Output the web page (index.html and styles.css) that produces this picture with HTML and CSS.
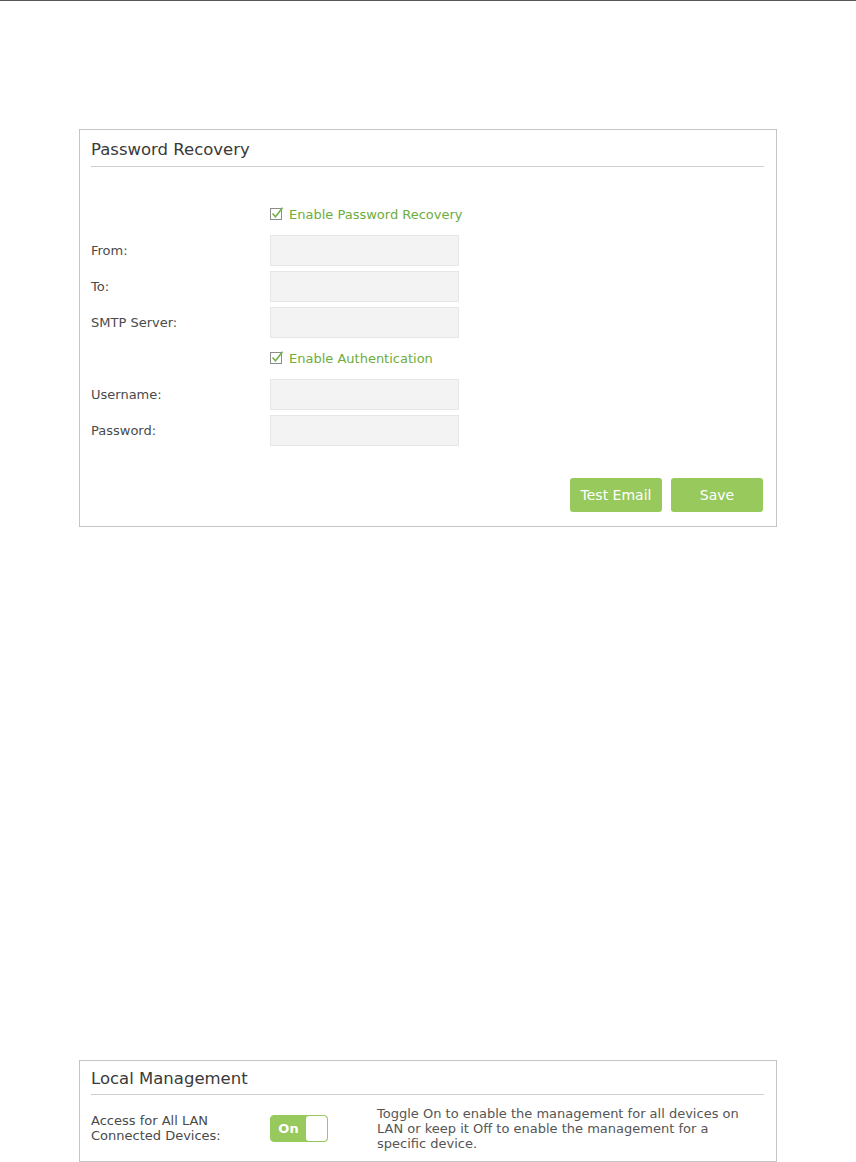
FILE: index.html
```html
<!DOCTYPE html>
<html lang="en">
<head>
    <meta charset="UTF-8">
    <title>Password Recovery</title>
    <link rel="stylesheet" href="styles.css">
</head>
<body>
    <div class="top-rule"></div>

    <!-- Password Recovery panel -->
    <div class="panel panel-recovery">
        <h3 class="panel-title">Password Recovery</h3>
        <div class="form">
            <div class="row">
                <span class="label"></span>
                <label class="check">
                    <svg width="14" height="14" viewBox="0 0 14 14">
                        <rect x="0.5" y="1.5" width="11" height="11" fill="#fff" stroke="#8c8c8c"/>
                        <path d="M2.5 6.5 L5.5 9.8 L12.5 0.8" fill="none" stroke="#74b144" stroke-width="1.6"/>
                    </svg>
                    Enable Password Recovery
                </label>
            </div>
            <div class="row">
                <span class="label">From:</span>
                <input class="field" type="text">
            </div>
            <div class="row">
                <span class="label">To:</span>
                <input class="field" type="text">
            </div>
            <div class="row">
                <span class="label">SMTP Server:</span>
                <input class="field" type="text">
            </div>
            <div class="row">
                <span class="label"></span>
                <label class="check">
                    <svg width="14" height="14" viewBox="0 0 14 14">
                        <rect x="0.5" y="1.5" width="11" height="11" fill="#fff" stroke="#8c8c8c"/>
                        <path d="M2.5 6.5 L5.5 9.8 L12.5 0.8" fill="none" stroke="#74b144" stroke-width="1.6"/>
                    </svg>
                    Enable Authentication
                </label>
            </div>
            <div class="row">
                <span class="label">Username:</span>
                <input class="field" type="text">
            </div>
            <div class="row">
                <span class="label">Password:</span>
                <input class="field" type="password">
            </div>
        </div>
        <div class="actions">
            <button class="btn">Test Email</button>
            <button class="btn">Save</button>
        </div>
    </div>

    <!-- Local Management panel -->
    <div class="panel panel-local">
        <h3 class="panel-title">Local Management</h3>
        <div class="local-row">
            <span class="label">Access for All LAN<br>Connected Devices:</span>
            <div class="toggle">
                <span class="toggle-text">On</span>
                <span class="toggle-knob"></span>
            </div>
            <p class="hint">Toggle On to enable the management for all devices on LAN or keep it Off to enable the management for a specific device.</p>
        </div>
    </div>
</body>
</html>
```

FILE: styles.css
```css
* {
    margin: 0;
    padding: 0;
    box-sizing: border-box;
}

body {
    font-family: "DejaVu Sans", Verdana, sans-serif;
    font-size: 13px;
    color: #555;
    background: #fff;
    width: 856px;
    height: 1162px;
    overflow: hidden;
}

.top-rule {
    height: 1px;
    background-color: #555;
}

/* Panels */
.panel {
    width: 698px;
    margin-left: 79px;
    border: 1px solid #c4c4c4;
    padding: 0 12px 0 11px;
}

.panel-recovery {
    margin-top: 128px;
    height: 398px;
}

.panel-local {
    margin-top: 533px;
    height: 102px;
}

.panel-title {
    font-size: 16.5px;
    font-weight: normal;
    color: #3a3a3a;
    line-height: 21px;
    padding: 9px 0 6px;
    border-bottom: 1px solid #cfcfcf;
}

.panel-local .panel-title {
    padding: 7px 0 5px;
}

/* Form rows */
.form {
    margin-top: 32px;
    display: flex;
    flex-direction: column;
    gap: 6px;
}

.row {
    display: grid;
    grid-template-columns: 179px 189px;
    align-items: center;
    height: 30px;
}

.label {
    color: #4a4a4a;
    line-height: 15px;
}

.field {
    width: 189px;
    height: 31px;
    background-color: #f3f3f3;
    border: 1px solid #e6e6e6;
    outline: none;
}

.check {
    display: flex;
    align-items: center;
    gap: 5px;
    color: #6dad3c;
    white-space: nowrap;
}

.check svg {
    flex: none;
}

/* Buttons */
.actions {
    display: flex;
    justify-content: flex-end;
    gap: 9px;
    margin-top: 33px;
    padding-right: 1px;
}

.btn {
    width: 92px;
    height: 34px;
    border: none;
    border-radius: 3px;
    background-color: #97c95c;
    color: #fff;
    font-family: "DejaVu Sans", Verdana, sans-serif;
    font-size: 14px;
}

/* Local management row */
.local-row {
    display: grid;
    grid-template-columns: 179px 107px 1fr;
    align-items: center;
    height: 66px;
}

.toggle {
    width: 58px;
    height: 27px;
    border: 1px solid #97c95c;
    border-radius: 4px;
    background-color: #97c95c;
    display: flex;
    align-items: center;
    overflow: hidden;
}

.toggle-text {
    width: 35px;
    text-align: center;
    color: #fff;
    font-weight: bold;
    font-size: 13px;
}

.toggle-knob {
    flex: 1;
    height: 100%;
    background-color: #fff;
    border-radius: 3px;
}

.hint {
    color: #555;
    line-height: 15px;
    max-width: 372px;
}
```
